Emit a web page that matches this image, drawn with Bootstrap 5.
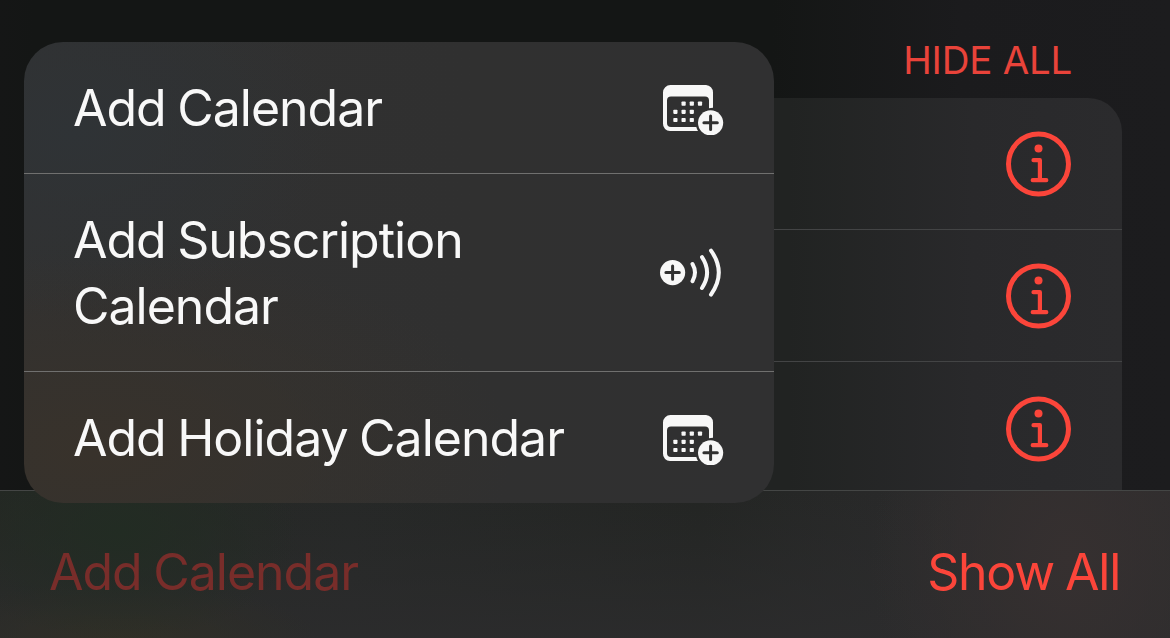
<!DOCTYPE html>
<html lang="en">
<head>
<meta charset="utf-8">
<meta name="viewport" content="width=device-width, initial-scale=1">
<title>Calendars</title>
<link href="https://cdn.jsdelivr.net/npm/bootstrap@5.3.0/dist/css/bootstrap.min.css" rel="stylesheet">
<style>
  :root { --tint: #fb453a; }
  body {
    font-family: Inter, "Liberation Sans", sans-serif;
    font-size: 50px; line-height: 66px; color: #f8f8f8;
    background: linear-gradient(90deg, #151616 0, #141615 3%, #141615 66%, #1b1b1d 82%, #1c1c1e 100%);
  }
  .sheet { height: 490px; padding: 0 48px; }
  .section-head { height: 98px; padding: 27px 50px 0 0; }
  .hide-all { font-size: 38.5px; line-height: 66px; color: #e9433a; letter-spacing: -.25px; }
  .calendars {
    height: 392px; border-radius: 34px 34px 0 0;
    background: linear-gradient(90deg, #212322 0, #212322 69%, #29292b 86%, #2b2b2d 100%);
  }
  .calendar-row { height: 132px; padding: 1px 50px 0 0; border-bottom: 1px solid #434445; }
  .calendar-row:last-child { border: 0; }
  .toolbar {
    height: 148px; padding: 48px 50px 0 49px; border-top: 1px solid #444645;
    background:
      radial-gradient(180px 110px at 120px 40px, #222c23 0, #222c2300 100%),
      radial-gradient(200px 60px at 120px 150px, #302f26 0, #302f2600 100%),
      radial-gradient(200px 240px at 1070px 70px, #363030 0, #36303000 100%),
      linear-gradient(180deg, #24262400 0, #2c2c2ddd 100%),
      linear-gradient(90deg, #242723 0, #262827 30%, #232523 60%, #2b2b2c 82%, #2e2d2e 100%);
  }
  .tool-btn { color: var(--tint); font-size: 50px; line-height: 66px; }
  .tool-dim { color: #782d2a; }
  .add-menu {
    left: 24px; top: 42px; width: 750px; height: 461px; border-radius: 39px;
    background:
      radial-gradient(260px 190px at 50px 90px, #2f3336 0, #2f333600 100%),
      radial-gradient(420px 210px at 70px 410px, #38322b 0, #38322b00 100%),
      linear-gradient(90deg, #313131 0, #303030 60%, #303031 100%);
  }
  .menu-row { padding: 33px 48px 32px 49px; border-bottom: 1px solid #70706f; }
  .menu-row:last-child { border: 0; }
  .menu-row svg { overflow: visible; }
  .t-cal { letter-spacing: -1px; word-spacing: -1.6px; }
  .t-show { letter-spacing: -1.25px; word-spacing: -1.6px; }
</style>
</head>
<body class="vh-100 overflow-hidden position-relative d-flex flex-column">
  <svg class="d-none" xmlns="http://www.w3.org/2000/svg">
    <symbol id="calendar-plus" viewBox="0 -2.500 64 54">
      <path fill="#f7f7f7" fill-rule="evenodd" d="M8.500 1.500h35.500a7.500 7.500 0 0 1 7 7.500v15.200a15 15 0 0 0-4 .5V17a4 4 0 0 0-4-4H9a4 4 0 0 0-4 4v22.500a4 4 0 0 0 4 4h25.300a15 15 0 0 0 1.700 4H8.500a7 7 0 0 1-7.500-7.500V9a7.500 7.500 0 0 1 7.500-7.500z"/>
      <g fill="#f7f7f7">
        <rect x="19.500" y="18" width="4.200" height="4.200" rx=".8"/><rect x="27.700" y="18" width="4.200" height="4.200" rx=".8"/><rect x="35.900" y="18" width="4.200" height="4.200" rx=".8"/>
        <rect x="11.300" y="26.200" width="4.200" height="4.200" rx=".8"/><rect x="19.500" y="26.200" width="4.200" height="4.200" rx=".8"/><rect x="27.700" y="26.200" width="4.200" height="4.200" rx=".8"/>
        <rect x="11.300" y="34.400" width="4.200" height="4.200" rx=".8"/><rect x="19.500" y="34.400" width="4.200" height="4.200" rx=".8"/><rect x="27.700" y="34.400" width="4.200" height="4.200" rx=".8"/>
      </g>
      <circle cx="48.600" cy="39.300" r="12.600" fill="#f7f7f7"/>
      <path d="M48.600 32.600v13.400M41.900 39.300h13.400" stroke="#303030" stroke-width="3" stroke-linecap="round"/>
    </symbol>
    <symbol id="subscribe" viewBox="-2 0 64 54" overflow="visible">
      <circle cx="8.600" cy="26.600" r="12.600" fill="#f7f7f7"/>
      <path d="M8.600 19.900v13.400M1.900 26.600h13.400" stroke="#303030" stroke-width="3" stroke-linecap="round"/>
      <path d="M28.500 18q5 8.600 0 17.200M38 11.200q10.200 15.400 0 30.800M47 4.600q15.600 22 0 44" fill="none" stroke="#f7f7f7" stroke-width="4" stroke-linecap="round"/>
    </symbol>
    <symbol id="info" viewBox="0 0 66 66">
      <circle cx="32.500" cy="33" r="30" fill="none" stroke="#fb453a" stroke-width="5"/>
      <circle cx="32.500" cy="17.500" r="4" fill="#fb453a"/>
      <path d="M27.500 29.200h6.400v20M26.700 49.200h13.600" fill="none" stroke="#fb453a" stroke-width="4.200" stroke-linecap="round" stroke-linejoin="round"/>
    </symbol>
  </svg>

  <main class="sheet flex-shrink-0">
    <div class="section-head d-flex justify-content-end">
      <span class="hide-all text-uppercase">Hide All</span>
    </div>
    <div class="calendars overflow-hidden">
      <div class="calendar-row d-flex align-items-center justify-content-end"><svg width="66" height="66"><use href="#info"/></svg></div>
      <div class="calendar-row d-flex align-items-center justify-content-end"><svg width="66" height="66"><use href="#info"/></svg></div>
      <div class="calendar-row d-flex align-items-center justify-content-end"><svg width="66" height="66"><use href="#info"/></svg></div>
    </div>
  </main>

  <footer class="toolbar flex-shrink-0 d-flex justify-content-between align-items-start">
    <span class="tool-btn tool-dim t-cal">Add Calendar</span>
    <span class="tool-btn t-show">Show All</span>
  </footer>

  <div class="add-menu position-absolute overflow-hidden">
    <div class="menu-row d-flex align-items-center justify-content-between">
      <span class="t-cal">Add Calendar</span><svg class="flex-shrink-0" width="64" height="54"><use href="#calendar-plus"/></svg>
    </div>
    <div class="menu-row d-flex align-items-center justify-content-between">
      <span class="t-cal">Add Subscription<br>Calendar</span><svg class="flex-shrink-0" width="64" height="54"><use href="#subscribe"/></svg>
    </div>
    <div class="menu-row d-flex align-items-center justify-content-between">
      <span class="t-cal">Add Holiday Calendar</span><svg class="flex-shrink-0" width="64" height="54"><use href="#calendar-plus"/></svg>
    </div>
  </div>
<script src="https://cdn.jsdelivr.net/npm/bootstrap@5.3.0/dist/js/bootstrap.bundle.min.js"></script>
</body>
</html>
